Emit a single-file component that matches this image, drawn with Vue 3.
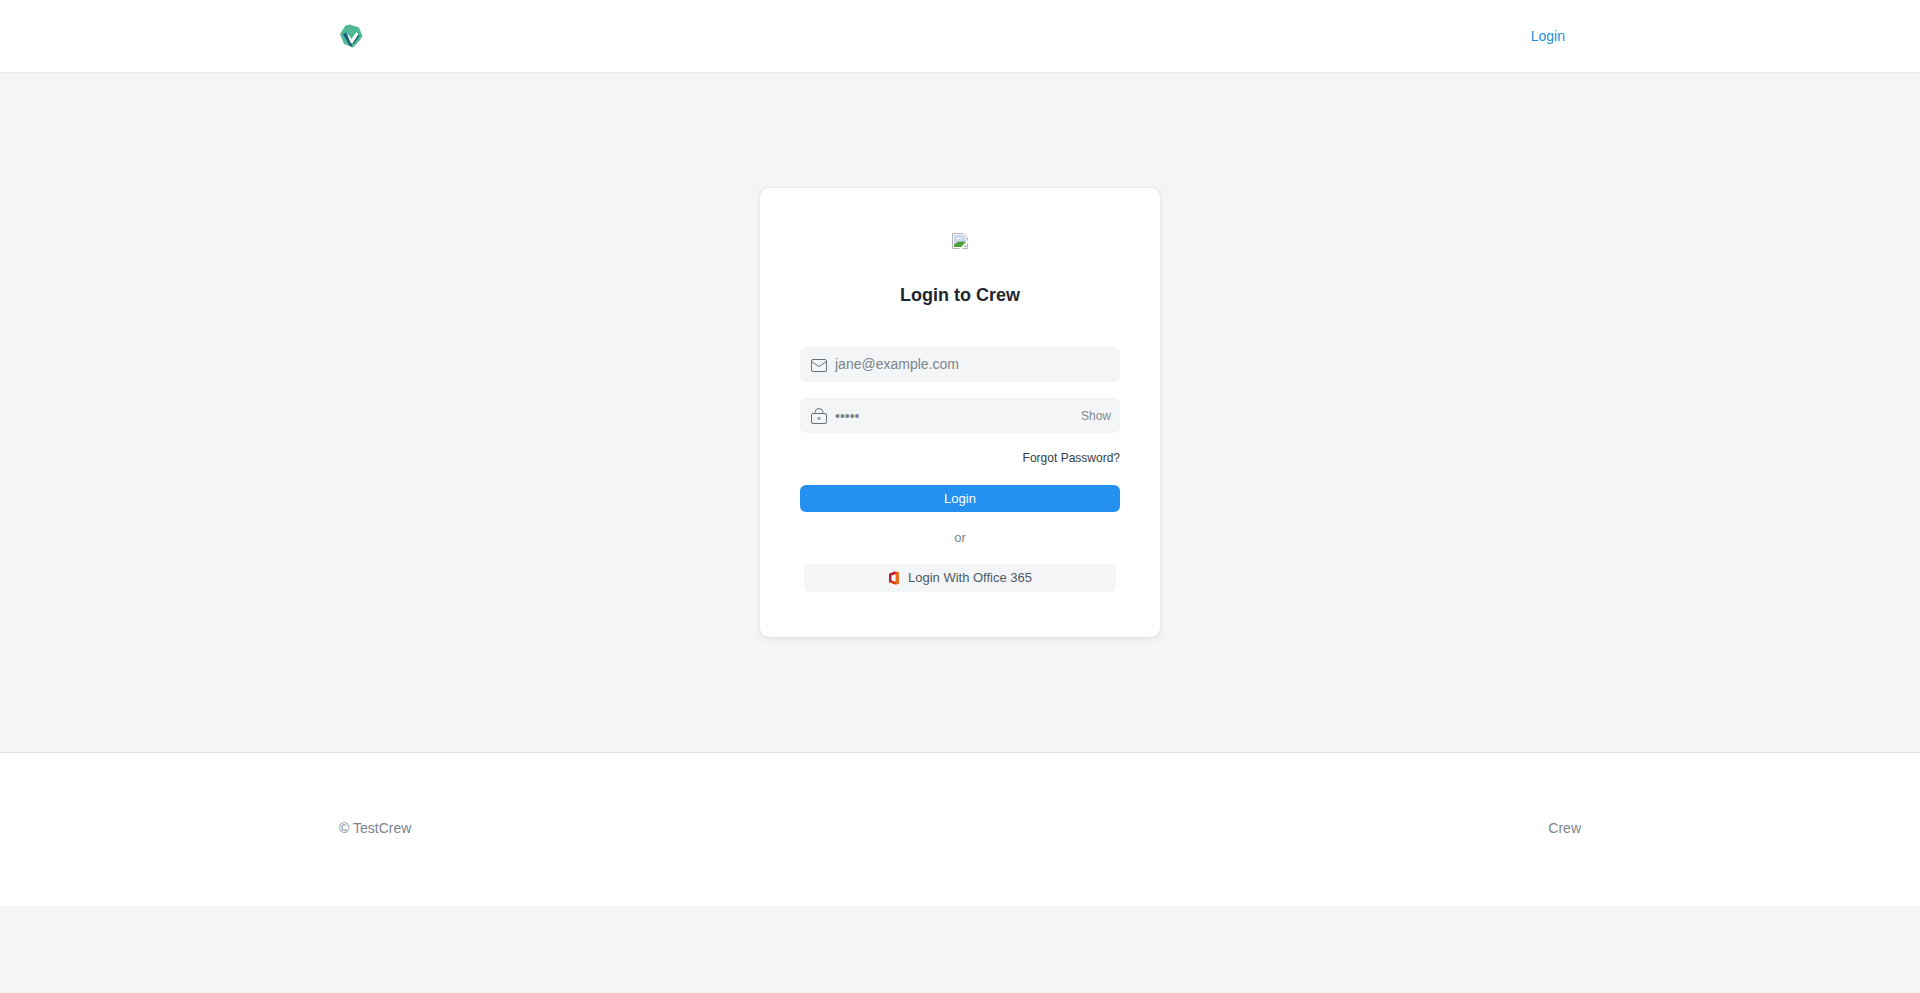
<template>
  <div class="page">
    <header class="navbar">
      <div class="nav-inner">
        <a class="brand" href="#">
          <svg width="24" height="24" viewBox="0 0 24 24">
            <path d="M6.5 1.5 L11 0.5 L20 3.5 L23.5 12 L21 16 L14 23.5 L5 20 L1 10 Z" fill="#4fb894" />
            <path d="M4 10 L7.5 8.5 L12 18.5 L13.5 23 L10.5 21.5 Z" fill="#1f5d7a" />
            <path d="M7.5 8.5 L12.5 15 L17.5 8 L19.5 10.5 L13.5 19.5 L11.5 18.5 Z" fill="#ffffff" />
            <path d="M19.5 10.5 L20.5 12 L14.5 20 L13.5 19.5 Z" fill="#1f5d7a" />
          </svg>
        </a>
        <a class="nav-login" href="#">Login</a>
      </div>
    </header>

    <main class="main">
      <section class="card">
        <div class="broken-img">
          <svg width="16" height="16" viewBox="0 0 16 16">
            <path d="M0.5 0.5 H11 L15.5 5 V15.5 H0.5 Z" fill="#fff" stroke="#b4b4b4" />
            <path d="M2 2 H10.5 L14 5.5 V14 H2 Z" fill="#c5d5ee" />
            <path d="M4.5 4.5 h4 l1.5 1.5 h-6 z" fill="#fff" />
            <path d="M2 14 V11.5 L6 9 L10 8.5 L14 9 V14 Z" fill="#4f9f3c" />
            <path d="M7 16 L16 7 V10 L10 16 Z" fill="#fff" />
          </svg>
        </div>
        <h1 class="title">Login to Crew</h1>

        <form class="form" @submit.prevent>
          <label class="field field-email">
            <svg class="field-icon" width="18" height="18" viewBox="0 0 18 18" fill="none" stroke="#687178" stroke-width="1">
              <rect x="1.5" y="3.5" width="15" height="12" rx="1.5" />
              <path d="M1.5 5.5 L9 10.5 L16.5 5.5" />
            </svg>
            <input class="field-input" type="text" placeholder="jane@example.com" />
          </label>

          <label class="field field-password">
            <svg class="field-icon" width="18" height="18" viewBox="0 0 18 18" fill="none" stroke="#687178" stroke-width="1">
              <rect x="1.5" y="6.5" width="15" height="10" rx="1.5" />
              <path d="M5 6.5 V5.5 a4 4 0 0 1 8 0 V6.5" />
              <circle cx="9" cy="11.5" r="1" />
            </svg>
            <input class="field-input" :type="showPassword ? 'text' : 'password'" v-model="password" />
            <span class="toggle" @click.prevent="showPassword = !showPassword">Show</span>
          </label>

          <div class="forgot-row">
            <a class="forgot" href="#">Forgot Password?</a>
          </div>

          <button class="login-btn" type="submit">Login</button>
        </form>

        <p class="or">or</p>

        <a class="office-btn" href="#">
          <svg width="12" height="14" viewBox="0 0 12 14">
            <path d="M1 3.5 Q1 2.8 1.8 2.5 L7 0.5 Q8 0.2 9 0.7 L11 1.7 V12.3 L9 13.3 Q8 13.8 7 13.5 L1.8 11.5 Q1 11.2 1 10.5 Z" fill="#d83b01" />
            <path d="M1 3.5 Q1 2.8 1.8 2.5 L7 0.5 V3 L3.5 4.5 V9.5 L1.8 11.5 Q1 11.2 1 10.5 Z" fill="#b0203a" />
            <path d="M3.5 4.5 L7.8 3.3 V10.8 L3.5 9.5 Z" fill="#fff" />
            <path d="M7.8 1 L11 1.7 V12.3 L7.8 13 Z" fill="#eb6c1b" />
          </svg>
          <span class="office-label">Login With Office 365</span>
        </a>
      </section>
    </main>

    <footer class="footer">
      <div class="footer-inner">
        <span>© TestCrew</span>
        <a href="#">Crew</a>
      </div>
    </footer>
  </div>
</template>

<script setup>
import { ref } from 'vue'

const password = ref('•••••')
const showPassword = ref(false)
</script>

<style>
html, body { background: #f4f5f6; }
</style>

<style scoped>
.page {
  min-height: 993px;
  font-family: "Liberation Sans", Arial, sans-serif;
  color: #1f272e;
  font-size: 14px;
}
a { text-decoration: none; }

.navbar {
  height: 73px;
  background: #fff;
  border-bottom: 1px solid #e8ebee;
  box-sizing: border-box;
}
.nav-inner {
  height: 100%;
  margin-left: 339px;
  width: 1226px;
  display: flex;
  align-items: center;
  justify-content: space-between;
}
.brand { display: flex; }
.nav-login { color: #2490dc; font-size: 14px; }

.main {
  height: 679px;
  box-sizing: border-box;
  padding-top: 115px;
  display: flex;
  justify-content: center;
  align-items: flex-start;
}
.card {
  width: 400px;
  height: 449px;
  box-sizing: border-box;
  background: #fff;
  border-radius: 8px;
  box-shadow: 0 0 1px rgba(0, 0, 0, .2), 0 2px 6px rgba(25, 39, 52, .08);
  padding: 45px 40px 0;
  display: flex;
  flex-direction: column;
  align-items: center;
}
.broken-img { height: 16px; display: flex; }
.title {
  margin: 35px 0 0;
  font-size: 18px;
  line-height: 22px;
  font-weight: 700;
  color: #1f272e;
}
.form { width: 320px; margin-top: 41px; display: flex; flex-direction: column; }
.field {
  height: 35px;
  background: #f4f5f6;
  border-radius: 6px;
  display: flex;
  align-items: center;
  padding: 0 9px 0 10px;
  gap: 7px;
  margin-bottom: 16px;
}
.field-password { margin-bottom: 0; }
.field-icon { flex: none; }
.field-input {
  flex: 1;
  min-width: 0;
  border: 0;
  padding: 0;
  outline: 0;
  background: transparent;
  font: 14px "Liberation Sans", Arial, sans-serif;
  color: #7a848c;
}
.field-email .field-input { padding-bottom: 2px; }
.field-input::placeholder { color: #7a848c; }
.toggle { font-size: 12px; color: #7f8a92; cursor: pointer; }
.forgot-row { display: flex; justify-content: flex-end; margin-top: 18px; }
.forgot { font-size: 12px; line-height: 14px; color: #333c44; }
.login-btn {
  margin-top: 20px;
  height: 27px;
  border: 0;
  border-radius: 6px;
  background: #2490ef;
  color: #fff;
  font: 13px "Liberation Sans", Arial, sans-serif;
  cursor: pointer;
}
.or { margin: 18px 0 0; font-size: 13px; line-height: 15px; color: #7a848c; }
.office-btn {
  margin-top: 19px;
  width: 312px;
  height: 28px;
  border-radius: 6px;
  background: #f4f5f6;
  color: #4c5a67;
  font-size: 13px;
  display: flex;
  align-items: center;
  justify-content: center;
  gap: 8px;
}
.office-label { padding-bottom: 2px; }

.footer {
  height: 154px;
  background: #fff;
  border-top: 1px solid #dfe3e6;
  box-sizing: border-box;
  color: #7a848c;
  font-size: 14px;
}
.footer-inner {
  height: 100%;
  margin-left: 339px;
  width: 1242px;
  padding-bottom: 3px;
  box-sizing: border-box;
  display: flex;
  align-items: center;
  justify-content: space-between;
}
.footer-inner a { color: #7a848c; }
</style>
